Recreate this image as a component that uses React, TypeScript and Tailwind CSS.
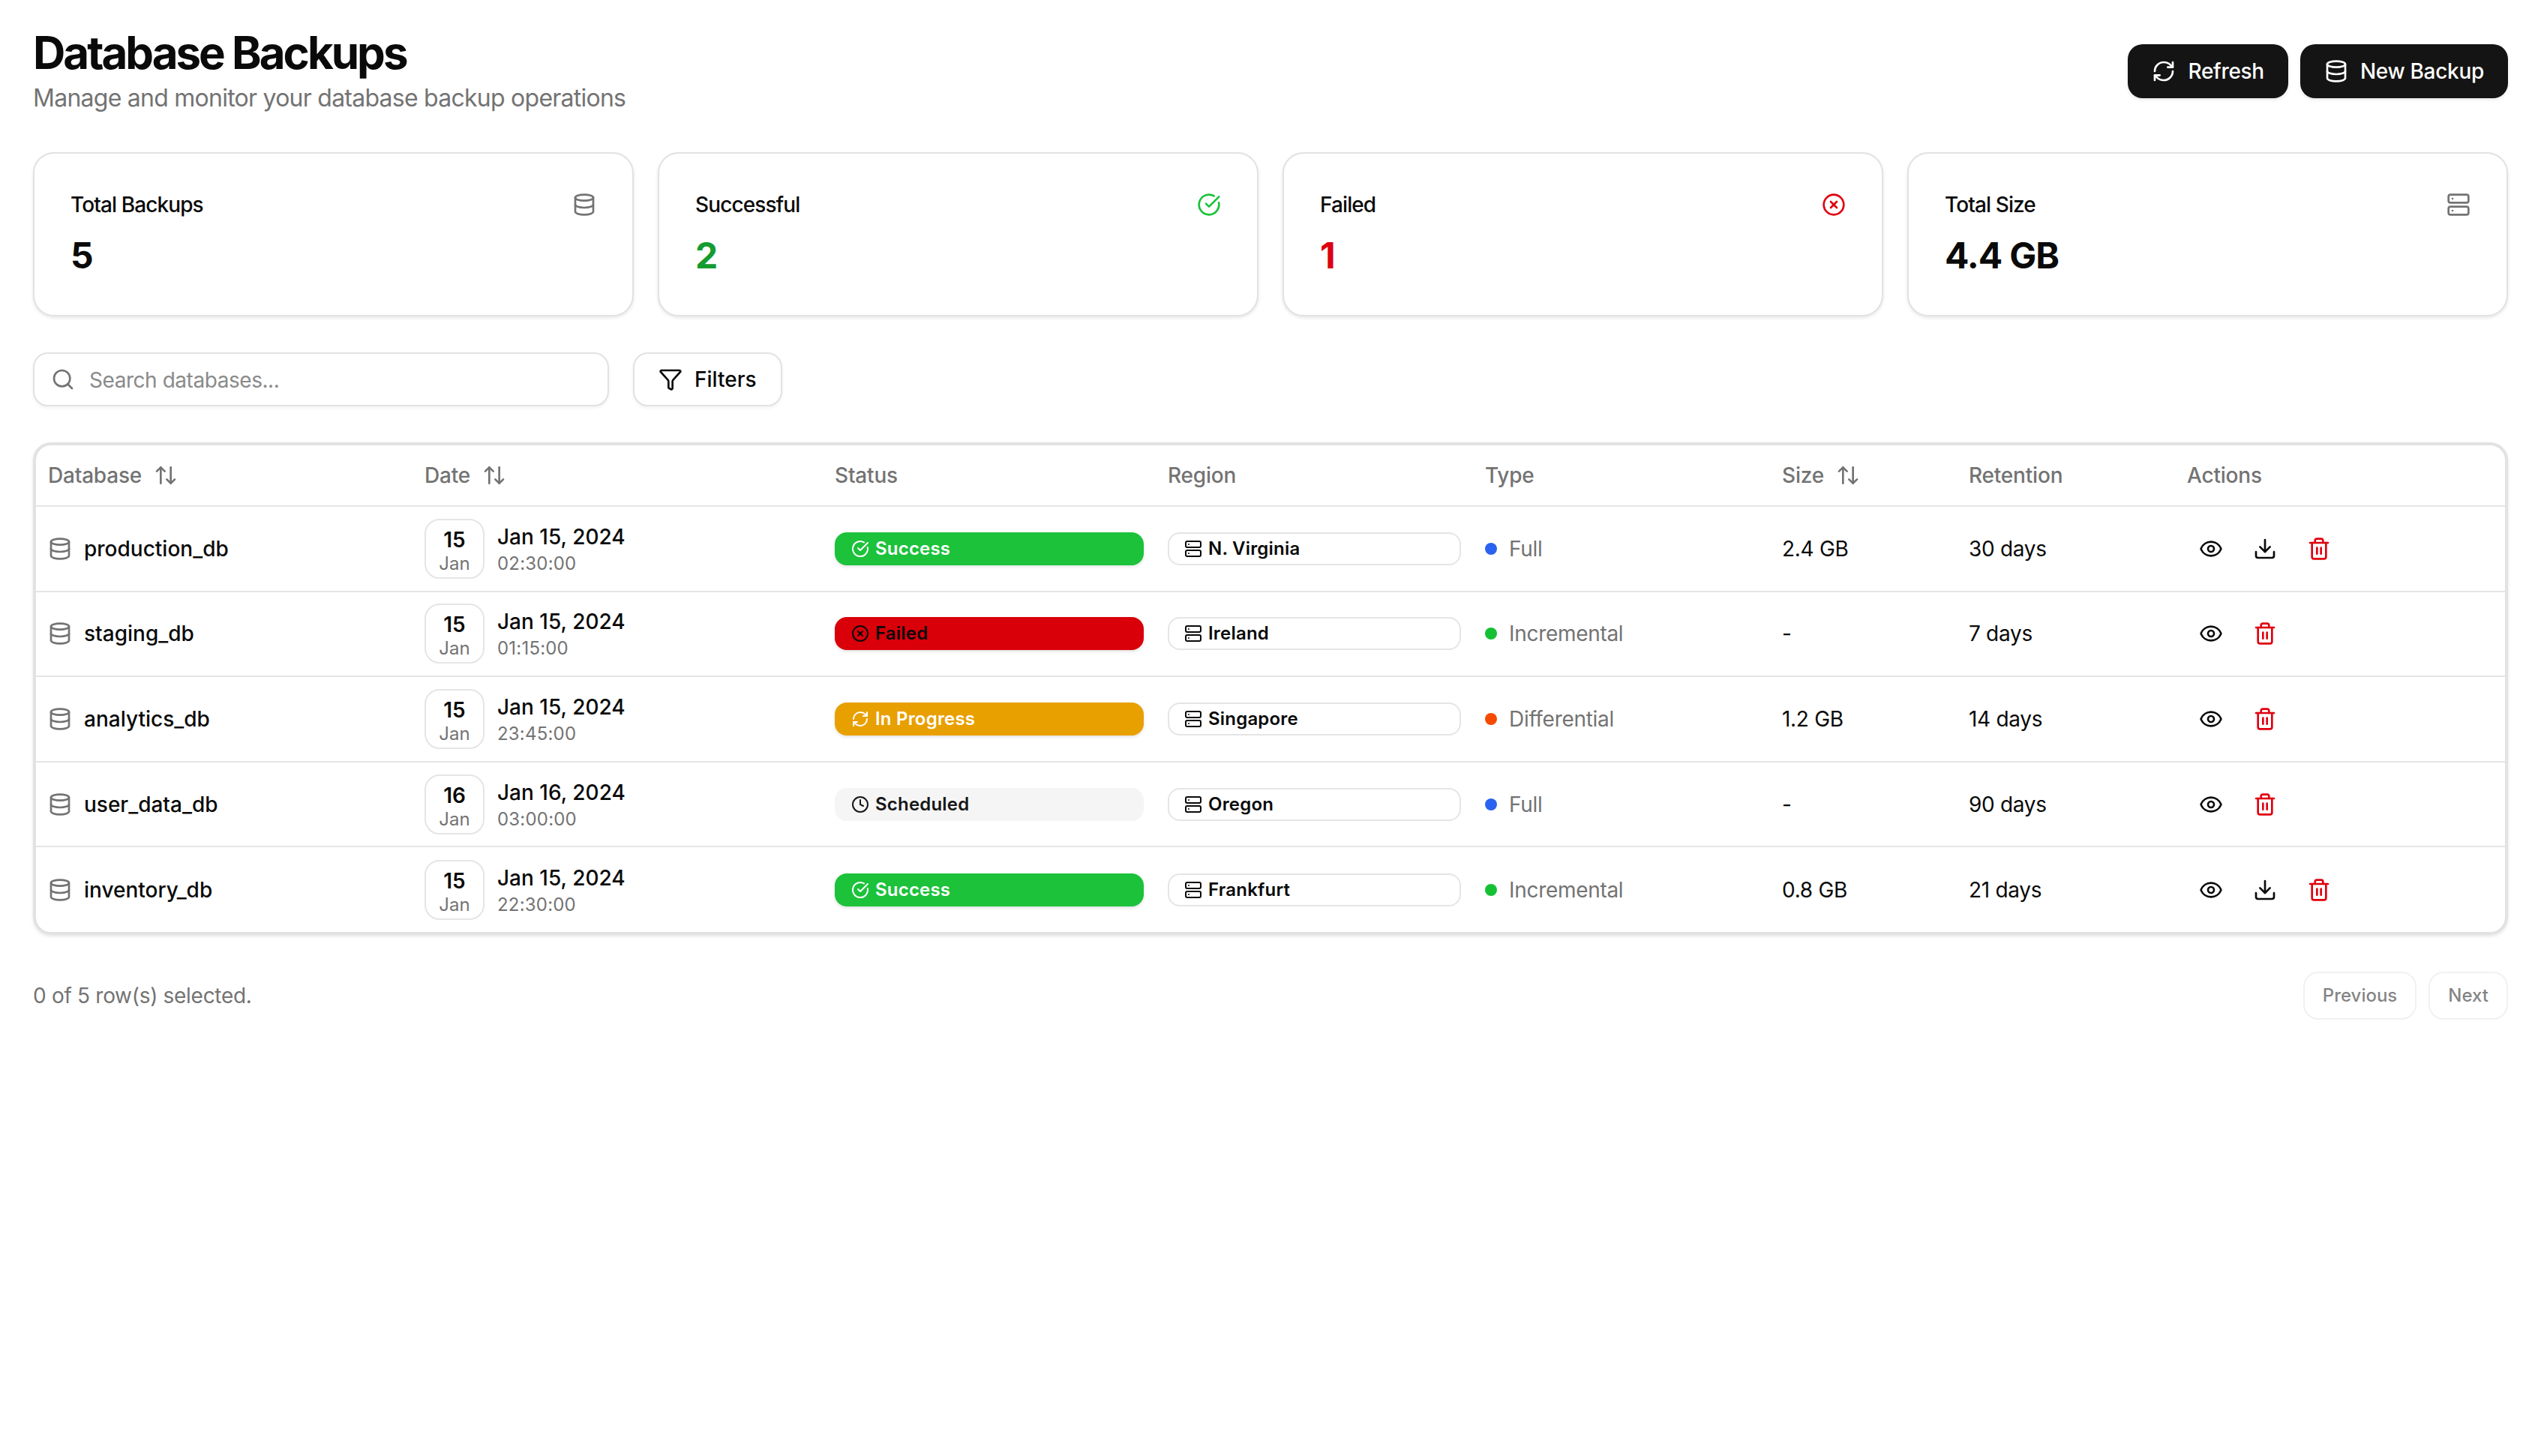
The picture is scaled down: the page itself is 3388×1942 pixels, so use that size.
import { ArrowUpDown, CircleCheckBig, CircleX, Clock, Database, Download, Eye, Filter, RefreshCw, Search, Server, Trash2 } from "lucide-react"
import type { ReactNode } from "react"

type Backup = {
  name: string
  day: string
  date: string
  time: string
  status: "Success" | "Failed" | "In Progress" | "Scheduled"
  region: string
  type: "Full" | "Incremental" | "Differential"
  size: string
  retention: string
}

const backups: Backup[] = [
  { name: "production_db", day: "15", date: "Jan 15, 2024", time: "02:30:00", status: "Success", region: "N. Virginia", type: "Full", size: "2.4 GB", retention: "30 days" },
  { name: "staging_db", day: "15", date: "Jan 15, 2024", time: "01:15:00", status: "Failed", region: "Ireland", type: "Incremental", size: "-", retention: "7 days" },
  { name: "analytics_db", day: "15", date: "Jan 15, 2024", time: "23:45:00", status: "In Progress", region: "Singapore", type: "Differential", size: "1.2 GB", retention: "14 days" },
  { name: "user_data_db", day: "16", date: "Jan 16, 2024", time: "03:00:00", status: "Scheduled", region: "Oregon", type: "Full", size: "-", retention: "90 days" },
  { name: "inventory_db", day: "15", date: "Jan 15, 2024", time: "22:30:00", status: "Success", region: "Frankfurt", type: "Incremental", size: "0.8 GB", retention: "21 days" },
]

const statusStyle = {
  Success: { pill: "bg-[#1bc23a] text-white shadow-[0_2px_4px_rgba(0,0,0,0.12)]", icon: <CircleCheckBig className="size-6" /> },
  Failed: { pill: "bg-[#d9000a] text-[#0a0a0a] shadow-[0_2px_4px_rgba(0,0,0,0.12)]", icon: <CircleX className="size-6" /> },
  "In Progress": { pill: "bg-[#e8a000] text-white shadow-[0_2px_4px_rgba(0,0,0,0.12)]", icon: <RefreshCw className="size-6" /> },
  Scheduled: { pill: "bg-[#f5f5f5] text-[#171717]", icon: <Clock className="size-6" /> },
}

const typeDot = {
  Full: "bg-[#2b63f0]",
  Incremental: "bg-[#16c034]",
  Differential: "bg-[#f54a00]",
}

function StatCard({ label, value, valueClass, icon }: { label: string; value: string; valueClass: string; icon: ReactNode }) {
  return (
    <div className="rounded-[28px] border-2 border-[#e2e2e2] bg-white px-12 pt-12 pb-[47px] shadow-[0_2px_4px_rgba(0,0,0,0.1)]">
      <div className="flex h-10 items-center justify-between">
        <span className="text-[28px] leading-10 font-medium tracking-[-0.9px] text-[#0a0a0a]">{label}</span>
        {icon}
      </div>
      <div className={`mt-4 text-[48px] leading-16 font-bold tracking-[-1.1px] ${valueClass}`}>{value}</div>
    </div>
  )
}

function SortHead({ label }: { label: string }) {
  return (
    <div className="flex items-center gap-4">
      {label}
      <ArrowUpDown className="size-8" />
    </div>
  )
}

export default function App() {
  return (
    <div className="min-h-screen bg-white px-11 pt-[34px] text-[#0a0a0a] [font-family:Inter,sans-serif]">
      {/* Header */}
      <div className="flex items-center justify-between">
        <div>
          <h1 className="text-[60px] leading-[73px] font-bold tracking-[-3px]">Database Backups</h1>
          <p className="text-[32px] leading-12 tracking-[-0.75px] text-[#737373]">Manage and monitor your database backup operations</p>
        </div>
        <div className="flex gap-4">
          <button className="flex h-[72px] items-center gap-4 rounded-[20px] bg-[#141414] px-8 text-[28px] font-medium tracking-[-0.3px] text-white shadow-[0_2px_4px_rgba(0,0,0,0.1)]">
            <RefreshCw className="size-8" />
            Refresh
          </button>
          <button className="flex h-[72px] items-center gap-4 rounded-[20px] bg-[#141414] px-8 text-[28px] font-medium tracking-[-0.3px] text-white shadow-[0_2px_4px_rgba(0,0,0,0.1)]">
            <Database className="size-8" />
            New Backup
          </button>
        </div>
      </div>

      {/* Stats */}
      <div className="mt-12 grid grid-cols-4 gap-8">
        <StatCard label="Total Backups" value="5" valueClass="text-[#0a0a0a]" icon={<Database className="size-8 text-[#737373]" />} />
        <StatCard label="Successful" value="2" valueClass="text-[#159c30]" icon={<CircleCheckBig className="size-8 text-[#1bc23a]" />} />
        <StatCard label="Failed" value="1" valueClass="text-[#dc0011]" icon={<CircleX className="size-8 text-[#e0000f]" />} />
        <StatCard label="Total Size" value="4.4 GB" valueClass="text-[#0a0a0a]" icon={<Server className="size-8 text-[#737373]" />} />
      </div>

      {/* Toolbar */}
      <div className="mt-12 flex gap-8">
        <div className="flex h-[72px] w-[768px] items-center gap-[19px] rounded-[20px] border-2 border-[#e2e2e2] bg-white pl-[22px] shadow-[0_2px_4px_rgba(0,0,0,0.06)]">
          <Search className="size-8 text-[#737373]" />
          <span className="pt-px text-[28px] tracking-[-0.45px] text-[#8a8a8a]">Search databases...</span>
        </div>
        <button className="flex h-[72px] items-center gap-4 rounded-[20px] border-2 border-[#e2e2e2] bg-white px-8 text-[28px] font-medium shadow-[0_2px_4px_rgba(0,0,0,0.06)]">
          <Filter className="size-8" />
          Filters
        </button>
      </div>

      {/* Table */}
      <div className="mt-12 overflow-hidden rounded-[24px] border-4 border-[#e2e2e2] shadow-[0_2px_4px_rgba(0,0,0,0.1)]">
        <table className="w-full table-fixed border-collapse text-left text-[28px]">
          <colgroup>
            <col className="w-[502px]" />
            <col className="w-[547px]" />
            <col className="w-[444px]" />
            <col className="w-[423px]" />
            <col className="w-[396px]" />
            <col className="w-[249px]" />
            <col className="w-[291px]" />
            <col />
          </colgroup>
          <thead>
            <tr className="h-[81px] border-b-2 border-[#e5e5e5] text-[#737373]">
              <th className="px-4 font-medium tracking-[-0.2px]"><SortHead label="Database" /></th>
              <th className="px-4 font-medium tracking-[-0.2px]"><SortHead label="Date" /></th>
              <th className="px-4 font-medium tracking-[-0.2px]">Status</th>
              <th className="px-4 font-medium tracking-[-0.2px]">Region</th>
              <th className="px-4 font-medium tracking-[-0.2px]">Type</th>
              <th className="px-4 font-medium tracking-[-0.2px]"><SortHead label="Size" /></th>
              <th className="px-4 font-medium tracking-[-0.2px]">Retention</th>
              <th className="px-4 font-medium tracking-[-0.2px]">Actions</th>
            </tr>
          </thead>
          <tbody>
            {backups.map((b) => (
              <tr key={b.name} className="h-[113.6px] border-b-2 border-[#e5e5e5] last:border-b-0">
                <td className="px-4">
                  <div className="flex items-center gap-4 font-medium">
                    <Database className="size-8 text-[#737373]" />
                    {b.name}
                  </div>
                </td>
                <td className="px-4">
                  <div className="flex items-center gap-[17px]">
                    <div className="flex h-20 w-20 flex-col items-center justify-center rounded-[20px] border-2 border-[#e5e5e5] pt-2">
                      <span className="text-[28px] leading-8 font-semibold">{b.day}</span>
                      <span className="text-2xl leading-8 text-[#737373]">Jan</span>
                    </div>
                    <div>
                      <div className="leading-10 font-medium">{b.date}</div>
                      <div className="text-2xl leading-8 tracking-[0.2px] text-[#737373]">{b.time}</div>
                    </div>
                  </div>
                </td>
                <td className="px-4">
                  <div className={`flex h-11 items-center gap-2 rounded-2xl px-[22px] text-2xl font-semibold tracking-[0.2px] ${statusStyle[b.status].pill}`}>
                    {statusStyle[b.status].icon}
                    {b.status}
                  </div>
                </td>
                <td className="px-4">
                  <div className="flex h-11 items-center gap-2 rounded-2xl border-2 border-[#e5e5e5] px-5 text-2xl font-semibold tracking-[0.2px]">
                    <Server className="size-6" />
                    {b.region}
                  </div>
                </td>
                <td className="px-4">
                  <div className="flex items-center gap-4 tracking-[-0.3px] text-[#737373]">
                    <span className={`size-4 rounded-full ${typeDot[b.type]}`} />
                    {b.type}
                  </div>
                </td>
                <td className="px-4 tracking-[-0.3px]">{b.size}</td>
                <td className="px-4 tracking-[-0.3px]">{b.retention}</td>
                <td className="px-4">
                  <div className="flex gap-2">
                    <button className="flex size-16 items-center justify-center"><Eye className="size-8" /></button>
                    {b.size !== "-" && b.status !== "In Progress" && (
                      <button className="flex size-16 items-center justify-center"><Download className="size-8" /></button>
                    )}
                    <button className="flex size-16 items-center justify-center text-[#e0000f]"><Trash2 className="size-8" /></button>
                  </div>
                </td>
              </tr>
            ))}
          </tbody>
        </table>
      </div>

      {/* Footer */}
      <div className="mt-[49px] flex items-center justify-between">
        <span className="text-[28px] tracking-[-0.3px] text-[#737373]">0 of 5 row(s) selected.</span>
        <div className="flex gap-4 opacity-50">
          <button className="h-16 rounded-[20px] border-2 border-[#e5e5e5] px-6 text-2xl font-medium">Previous</button>
          <button className="h-16 rounded-[20px] border-2 border-[#e5e5e5] px-6 text-2xl font-medium">Next</button>
        </div>
      </div>
    </div>
  )
}
